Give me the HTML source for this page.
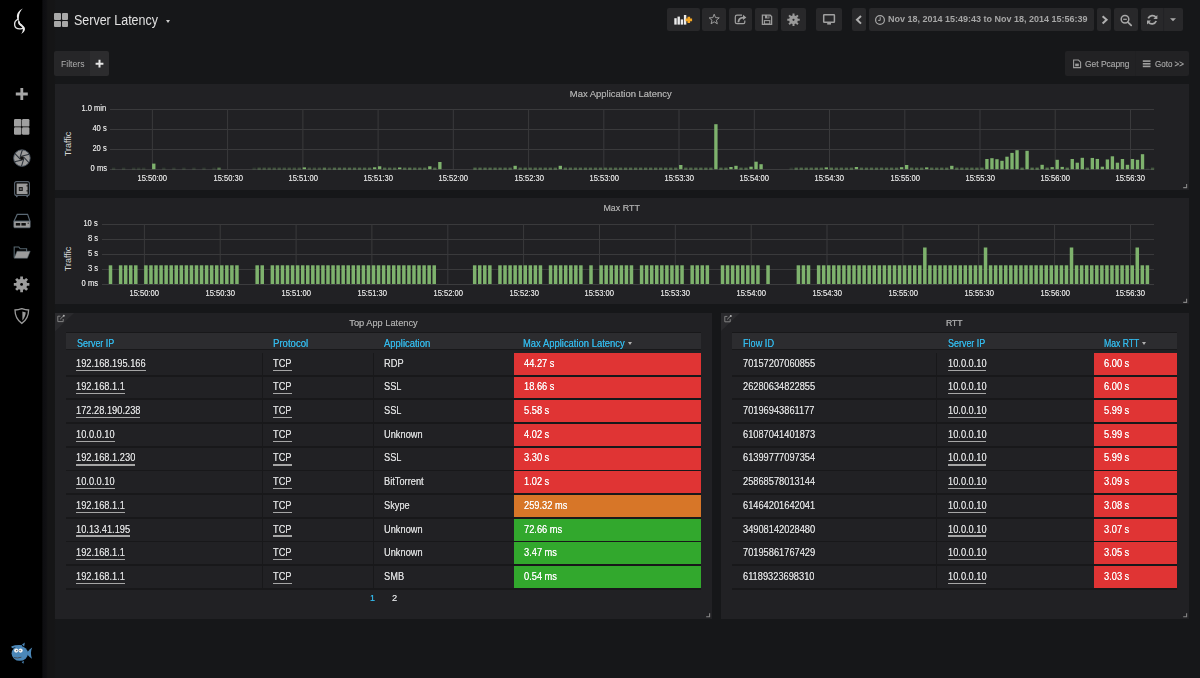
<!DOCTYPE html>
<html><head><meta charset="utf-8">
<style>
*{margin:0;padding:0;box-sizing:border-box}
html,body{width:1200px;height:678px;overflow:hidden;background:#161719;font-family:"Liberation Sans",sans-serif;color:#d8d9da}
.a{position:absolute}
.btn{position:absolute;top:8px;height:23px;background:#28282a;border-radius:2px}
.t{position:absolute;white-space:pre;line-height:1}
.hdr{position:absolute;height:15.6px;background:#2c2c2f;border-top:1.7px solid #18181a;border-bottom:1.8px solid #18181a;box-sizing:content-box}
</style></head><body>

<div class="a" style="left:0;top:0;width:42px;height:678px;background:#000"></div>
<div class="a" style="left:42px;top:0;width:14px;height:678px;background:linear-gradient(to right,#060607 0px,#0e0e11 1.5px,#101013 4px,#151516 6px,#151516 12px,#161719 14px)"></div>
<svg class="a" style="left:0;top:0" width="42" height="678"><path d="M22.8,8.6 C19.2,10.3 16.8,13.4 16.9,16.8 C17,19.8 18.6,21.8 20.6,23.5 C23,25.5 25.1,27 25,28.9 C24.9,31.1 23.2,32.7 21.1,34 C22.1,32.4 23,30.7 22.8,28.9 C22.6,27.2 20.4,25.6 19.2,24.4 C18.3,23.3 18.8,21.2 18.9,16.9 C19,13.6 20.6,10.8 22.8,8.6 Z" fill="#ececec"/><path d="M18.2,19.2 C15.7,20.2 14.3,22.8 14.7,25.4 C15.1,27.9 17.6,28.9 20.2,28.8 C21.4,28.7 22.4,28.5 23.3,28.1" fill="none" stroke="#e6e6e6" stroke-width="1.3"/><path d="M18.9,21.6 C18.7,23.4 19.6,24.6 21.6,25.4" fill="none" stroke="#e6e6e6" stroke-width="1.7" stroke-linecap="round"/><path d="M21.8,88 V100 M15.8,94 H27.8" stroke="#a6a6a6" stroke-width="2.8"/><rect x="14" y="119" width="7.4" height="7.6" rx="1.2" fill="#a0a0a0"/><rect x="22" y="119" width="7.4" height="7.6" rx="1.2" fill="#a0a0a0"/><rect x="14" y="127.2" width="7.4" height="7.6" rx="1.2" fill="#a0a0a0"/><rect x="22" y="127.2" width="7.4" height="7.6" rx="1.2" fill="#a0a0a0"/><circle cx="21.9" cy="158.1" r="8.3" fill="#9c9c9c" stroke="#46505c" stroke-width="0.9"/><line x1="23.81" y1="158.69" x2="21.43" y2="166.39" stroke="#2a3038" stroke-width="1.05"/><line x1="22.34" y1="160.05" x2="14.49" y2="161.84" stroke="#2a3038" stroke-width="1.05"/><line x1="20.43" y1="159.46" x2="14.96" y2="153.55" stroke="#2a3038" stroke-width="1.05"/><line x1="19.99" y1="157.51" x2="22.37" y2="149.81" stroke="#2a3038" stroke-width="1.05"/><line x1="21.46" y1="156.15" x2="29.31" y2="154.36" stroke="#2a3038" stroke-width="1.05"/><line x1="23.37" y1="156.74" x2="28.84" y2="162.65" stroke="#2a3038" stroke-width="1.05"/><circle cx="21.9" cy="158.1" r="1.9" fill="#111"/><rect x="14.6" y="181.6" width="14.8" height="13.8" rx="2" fill="none" stroke="#58636e" stroke-width="1.1"/><rect x="16.6" y="183.5" width="11" height="10.6" fill="#9a9a9a"/><rect x="18.8" y="187" width="4" height="4" fill="#222"/><rect x="19.8" y="188" width="2" height="2" fill="#666"/><rect x="26.6" y="185" width="1.2" height="1.6" fill="#222"/><rect x="26.6" y="190" width="1.2" height="1.6" fill="#222"/><rect x="16" y="195.6" width="1.6" height="1.6" fill="#58636e"/><rect x="26.4" y="195.6" width="1.6" height="1.6" fill="#58636e"/><path d="M17.2,214.4 H27.6 L30,221.2 H14 Z" fill="none" stroke="#5a6874" stroke-width="1.1"/><rect x="13.8" y="221.2" width="16.4" height="6.6" rx="0.8" fill="#9c9c9c" stroke="#5a6874" stroke-width="0.6"/><rect x="15.8" y="223" width="4.4" height="2.6" fill="#111"/><rect x="21.4" y="223" width="4.4" height="2.6" fill="#111"/><circle cx="28.2" cy="223.2" r="0.6" fill="#111"/><path d="M14.2,257.8 V247 H18.8 L20.2,248.8 H26.6 V251.4" fill="none" stroke="#56666f" stroke-width="1.1"/><path d="M14.2,258.2 L17,251.2 H30.2 L27.4,258.2 Z" fill="#9c9c9c" stroke="#56666f" stroke-width="0.5"/><path d="M27.03,283.02 L29.38,283.04 L29.38,285.76 L27.03,285.78 L26.41,287.26 L28.06,288.94 L26.14,290.86 L24.46,289.21 L22.98,289.83 L22.96,292.18 L20.24,292.18 L20.22,289.83 L18.74,289.21 L17.06,290.86 L15.14,288.94 L16.79,287.26 L16.17,285.78 L13.82,285.76 L13.82,283.04 L16.17,283.02 L16.79,281.54 L15.14,279.86 L17.06,277.94 L18.74,279.59 L20.22,278.97 L20.24,276.62 L22.96,276.62 L22.98,278.97 L24.46,279.59 L26.14,277.94 L28.06,279.86 L26.41,281.54Z" fill="#9c9c9c"/><circle cx="21.6" cy="284.4" r="4.6" fill="#9c9c9c"/><circle cx="21.6" cy="284.4" r="1.4" fill="#000"/><path d="M21.8,308.6 C24.4,309.6 26.6,310 28.6,310 C28.6,315.8 26.2,320.4 21.8,323.4 C17.4,320.4 15,315.8 15,310 C17,310 19.2,309.6 21.8,308.6 Z" fill="none" stroke="#9a9a9a" stroke-width="1.3"/><path d="M22.4,311.6 L25.8,312.4 C25.4,315.8 24,318.6 22.4,320.4 Z" fill="#9a9a9a"/><path d="M22,644.6 L24.8,642.6 L24.2,646.5 Z" fill="#4b87b8"/><path d="M27,652.5 Q30,648.4 32.2,647.6 Q29.8,652.6 32,658.8 Q29.6,657.4 27.2,654.6 Z" fill="#4b87b8"/><path d="M21.6,662 L23.4,663.8 L24,661 Z" fill="#4b87b8"/><ellipse cx="19.8" cy="653.4" rx="8.2" ry="7.4" fill="#4b87b8"/><path d="M11.6,647.4 Q16,645.6 22,646.2" fill="none" stroke="#4b87b8" stroke-width="2"/><circle cx="16.2" cy="650.6" r="2.1" fill="#f4f4f4"/><circle cx="20.6" cy="650.6" r="2.1" fill="#f4f4f4"/><circle cx="16.7" cy="650.6" r="0.7" fill="#555"/><circle cx="20.1" cy="650.6" r="0.7" fill="#555"/><path d="M14,657.6 Q17.5,658.6 21.4,657.2" fill="none" stroke="#444" stroke-width="0.9"/></svg>
<div class="a" style="left:54px;top:13px;width:6.6px;height:6.6px;background:#a8a8a8;border-radius:1px"></div>
<div class="a" style="left:61.5px;top:13px;width:6.6px;height:6.6px;background:#a8a8a8;border-radius:1px"></div>
<div class="a" style="left:54px;top:20.5px;width:6.6px;height:6.6px;background:#a8a8a8;border-radius:1px"></div>
<div class="a" style="left:61.5px;top:20.5px;width:6.6px;height:6.6px;background:#a8a8a8;border-radius:1px"></div>
<div class="a" style="left:166px;top:20px;width:0;height:0;border-left:2.5px solid transparent;border-right:2.5px solid transparent;border-top:3px solid #ccc"></div>
<div class="btn" style="left:667px;width:33px"></div>
<div class="btn" style="left:702px;width:24px"></div>
<div class="btn" style="left:729px;width:23px"></div>
<div class="btn" style="left:755px;width:23px"></div>
<div class="btn" style="left:781px;width:25px"></div>
<div class="btn" style="left:816px;width:26px"></div>
<div class="btn" style="left:852px;width:14px"></div>
<div class="btn" style="left:869px;width:225px"></div>
<div class="btn" style="left:1097px;width:14px"></div>
<div class="btn" style="left:1114px;width:24px"></div>
<div class="btn" style="left:1141px;width:42px"></div>
<svg class="a" style="left:0;top:0" width="1200" height="40"><rect x="674.3" y="18.2" width="2.4" height="6.4" fill="#ececec"/><rect x="677.5" y="16.6" width="2.4" height="8.0" fill="#ececec"/><rect x="680.7" y="19.4" width="2.4" height="5.2" fill="#ececec"/><rect x="683.9" y="15" width="2.4" height="9.6" fill="#ececec"/><path d="M688.8,16.8 V23.1 M685.6,19.9 H692.1" stroke="#f5a623" stroke-width="2.6"/><polygon points="714.20,14.20 715.55,17.64 719.24,17.86 716.39,20.21 717.32,23.79 714.20,21.80 711.08,23.79 712.01,20.21 709.16,17.86 712.85,17.64" fill="none" stroke="#9c9c9c" stroke-width="1" stroke-linejoin="round"/><path d="M742,15.2 H737 Q735.3,15.2 735.3,17 V22.2 Q735.3,23.6 737,23.6 H743.4 Q744.8,23.6 744.8,22.2 V20.6" fill="none" stroke="#a0a0a0" stroke-width="1.2"/><path d="M738.4,22.2 Q738.6,17.8 743.2,17.6" fill="none" stroke="#a0a0a0" stroke-width="1.8"/><path d="M743,14.8 L746.4,17.4 L743,20 Z" fill="#a0a0a0"/><path d="M762.4,15.2 H770.2 L771.6,16.6 V24.4 H762.4 Z" fill="none" stroke="#9c9c9c" stroke-width="1.3"/><rect x="765" y="15" width="4.4" height="3.4" fill="#9c9c9c"/><rect x="767.4" y="15.6" width="1.1" height="2.2" fill="#2a2a2c"/><rect x="764.4" y="20.6" width="5.4" height="3.4" fill="none" stroke="#9c9c9c" stroke-width="1.1"/><path d="M797.79,18.81 L799.72,18.81 L799.72,20.79 L797.79,20.79 L797.23,22.14 L798.60,23.50 L797.20,24.90 L795.84,23.53 L794.49,24.09 L794.49,26.02 L792.51,26.02 L792.51,24.09 L791.16,23.53 L789.80,24.90 L788.40,23.50 L789.77,22.14 L789.21,20.79 L787.28,20.79 L787.28,18.81 L789.21,18.81 L789.77,17.46 L788.40,16.10 L789.80,14.70 L791.16,16.07 L792.51,15.51 L792.51,13.58 L794.49,13.58 L794.49,15.51 L795.84,16.07 L797.20,14.70 L798.60,16.10 L797.23,17.46Z" fill="#9a9a9a"/><circle cx="793.5" cy="19.8" r="3.8" fill="#9a9a9a"/><circle cx="793.5" cy="19.8" r="1.1" fill="#2a2a2c"/><rect x="823.7" y="14.7" width="10.7" height="7.6" rx="0.6" fill="none" stroke="#a0a0a0" stroke-width="1.5"/><rect x="827.2" y="22.6" width="3.8" height="2" fill="#a0a0a0"/><path d="M861,16 L857,19.8 L861,23.6" fill="none" stroke="#b0b0b0" stroke-width="2"/><path d="M1102.6,16.2 L1106.6,19.8 L1102.6,23.4" fill="none" stroke="#b0b0b0" stroke-width="2"/><circle cx="880" cy="20" r="4.4" fill="none" stroke="#a8a8a8" stroke-width="1.2"/><path d="M880.2,17.2 V20.4 H878.2" fill="none" stroke="#a8a8a8" stroke-width="1"/><circle cx="1125" cy="19.3" r="3.8" fill="none" stroke="#a8a8a8" stroke-width="1.5"/><path d="M1127.8,22.2 L1131.2,25.4" stroke="#a8a8a8" stroke-width="1.8" stroke-linecap="round"/><path d="M1123.2,19.3 H1126.8" stroke="#a8a8a8" stroke-width="1.2"/><path d="M1148.2,18.4 A4.6,4.6 0 0 1 1156,17.4" fill="none" stroke="#a8a8a8" stroke-width="1.8"/><path d="M1157.4,15 V19 H1153.4 Z" fill="#a8a8a8"/><path d="M1156.2,21 A4.6,4.6 0 0 1 1148.4,22.2" fill="none" stroke="#a8a8a8" stroke-width="1.8"/><path d="M1147,24.4 V20.4 H1151 Z" fill="#a8a8a8"/><path d="M1170,18.2 H1176 L1173,21.2 Z" fill="#a8a8a8"/><line x1="1163.6" y1="8" x2="1163.6" y2="31" stroke="#232325" stroke-width="1"/></svg>
<div class="a" style="left:54px;top:51px;width:36px;height:25px;background:#262628;border-radius:2px 0 0 2px"></div>
<div class="a" style="left:90px;top:51px;width:19px;height:25px;background:#2c2c2e;border-radius:0 2px 2px 0"></div>
<svg class="a" style="left:0;top:0" width="120" height="80"><path d="M99.5,59.8 V67.6 M95.6,63.7 H103.4" stroke="#e6e6e6" stroke-width="2"/></svg>
<div class="a" style="left:1065px;top:51px;width:124px;height:25px;background:#222224;border-radius:2px"></div>
<div class="a" style="left:1135px;top:51px;width:1px;height:25px;background:#202022"></div>
<svg class="a" style="left:1060px;top:50px" width="100" height="30"><path d="M13.6,10 H18.4 L20.6,12.2 V17.6 H13.6 Z" fill="none" stroke="#9a9a9a" stroke-width="1.1"/><rect x="15.2" y="13.6" width="3.6" height="2.6" fill="#9a9a9a"/><rect x="82.8" y="10.3" width="7.7" height="1.6" fill="#a0a0a0"/><rect x="82.8" y="13" width="7.7" height="1.6" fill="#a0a0a0"/><rect x="82.8" y="15.6" width="7.7" height="1.6" fill="#a0a0a0"/></svg>
<div class="a" style="left:55px;top:84px;width:1134px;height:106px;background:#212124"></div>
<div class="a" style="left:55px;top:198px;width:1134px;height:106px;background:#212124"></div>
<div class="a" style="left:55px;top:313px;width:657px;height:306px;background:#212124"></div>
<div class="a" style="left:721px;top:313px;width:468px;height:306px;background:#212124"></div>
<svg class="a" style="left:0;top:0" width="1200" height="678"><line x1="110" x2="1154" y1="109.5" y2="109.5" stroke="#3a3a3c" stroke-width="1"/><line x1="110" x2="1154" y1="129.5" y2="129.5" stroke="#3a3a3c" stroke-width="1"/><line x1="110" x2="1154" y1="149.5" y2="149.5" stroke="#3a3a3c" stroke-width="1"/><line x1="110" x2="1154" y1="169.5" y2="169.5" stroke="#3c3c3e" stroke-width="1"/><line x1="152.4" x2="152.4" y1="109" y2="169" stroke="#3a3a3c" stroke-width="1"/><line x1="227.6" x2="227.6" y1="109" y2="169" stroke="#3a3a3c" stroke-width="1"/><line x1="302.9" x2="302.9" y1="109" y2="169" stroke="#3a3a3c" stroke-width="1"/><line x1="378.1" x2="378.1" y1="109" y2="169" stroke="#3a3a3c" stroke-width="1"/><line x1="453.3" x2="453.3" y1="109" y2="169" stroke="#3a3a3c" stroke-width="1"/><line x1="528.6" x2="528.6" y1="109" y2="169" stroke="#3a3a3c" stroke-width="1"/><line x1="603.8" x2="603.8" y1="109" y2="169" stroke="#3a3a3c" stroke-width="1"/><line x1="679.0" x2="679.0" y1="109" y2="169" stroke="#3a3a3c" stroke-width="1"/><line x1="754.3" x2="754.3" y1="109" y2="169" stroke="#3a3a3c" stroke-width="1"/><line x1="829.5" x2="829.5" y1="109" y2="169" stroke="#3a3a3c" stroke-width="1"/><line x1="904.8" x2="904.8" y1="109" y2="169" stroke="#3a3a3c" stroke-width="1"/><line x1="980.0" x2="980.0" y1="109" y2="169" stroke="#3a3a3c" stroke-width="1"/><line x1="1055.2" x2="1055.2" y1="109" y2="169" stroke="#3a3a3c" stroke-width="1"/><line x1="1130.5" x2="1130.5" y1="109" y2="169" stroke="#3a3a3c" stroke-width="1"/><rect x="111.95" y="167.60" width="3.35" height="2.2" fill="#7eb26d" fill-opacity="0.16"/><rect x="121.99" y="167.60" width="3.35" height="2.2" fill="#7eb26d" fill-opacity="0.16"/><rect x="132.03" y="167.60" width="3.35" height="2.2" fill="#7eb26d" fill-opacity="0.16"/><rect x="137.05" y="167.60" width="3.35" height="2.2" fill="#7eb26d" fill-opacity="0.16"/><rect x="142.06" y="167.60" width="3.35" height="2.2" fill="#7eb26d" fill-opacity="0.16"/><rect x="152.10" y="163.60" width="3.35" height="5.60" fill="#7eb26d"/><rect x="162.14" y="167.60" width="3.35" height="2.2" fill="#7eb26d" fill-opacity="0.16"/><rect x="172.18" y="167.60" width="3.35" height="2.2" fill="#7eb26d" fill-opacity="0.16"/><rect x="182.22" y="167.60" width="3.35" height="2.2" fill="#7eb26d" fill-opacity="0.16"/><rect x="192.25" y="167.60" width="3.35" height="2.2" fill="#7eb26d" fill-opacity="0.16"/><rect x="202.29" y="167.60" width="3.35" height="2.2" fill="#7eb26d" fill-opacity="0.16"/><rect x="212.33" y="167.60" width="3.35" height="2.2" fill="#7eb26d" fill-opacity="0.16"/><rect x="217.35" y="167.60" width="3.35" height="2.2" fill="#7eb26d" fill-opacity="0.58"/><rect x="252.48" y="167.60" width="3.35" height="2.2" fill="#7eb26d" fill-opacity="0.16"/><rect x="257.50" y="167.60" width="3.35" height="2.2" fill="#7eb26d" fill-opacity="0.35"/><rect x="262.52" y="167.60" width="3.35" height="2.2" fill="#7eb26d" fill-opacity="0.35"/><rect x="267.54" y="167.60" width="3.35" height="2.2" fill="#7eb26d" fill-opacity="0.35"/><rect x="272.56" y="167.60" width="3.35" height="2.2" fill="#7eb26d" fill-opacity="0.35"/><rect x="277.58" y="167.60" width="3.35" height="2.2" fill="#7eb26d" fill-opacity="0.35"/><rect x="282.60" y="167.60" width="3.35" height="2.2" fill="#7eb26d" fill-opacity="0.35"/><rect x="287.62" y="167.60" width="3.35" height="2.2" fill="#7eb26d" fill-opacity="0.35"/><rect x="292.63" y="167.60" width="3.35" height="2.2" fill="#7eb26d" fill-opacity="0.35"/><rect x="297.65" y="167.60" width="3.35" height="2.2" fill="#7eb26d" fill-opacity="0.35"/><rect x="302.67" y="167.40" width="3.35" height="1.80" fill="#7eb26d"/><rect x="307.69" y="167.60" width="3.35" height="2.2" fill="#7eb26d" fill-opacity="0.35"/><rect x="312.71" y="167.60" width="3.35" height="2.2" fill="#7eb26d" fill-opacity="0.35"/><rect x="317.73" y="167.60" width="3.35" height="2.2" fill="#7eb26d" fill-opacity="0.35"/><rect x="322.75" y="167.60" width="3.35" height="2.2" fill="#7eb26d" fill-opacity="0.58"/><rect x="327.77" y="167.60" width="3.35" height="2.2" fill="#7eb26d" fill-opacity="0.35"/><rect x="332.79" y="167.60" width="3.35" height="2.2" fill="#7eb26d" fill-opacity="0.50"/><rect x="337.81" y="167.60" width="3.35" height="2.2" fill="#7eb26d" fill-opacity="0.50"/><rect x="342.82" y="167.60" width="3.35" height="2.2" fill="#7eb26d" fill-opacity="0.50"/><rect x="347.84" y="167.60" width="3.35" height="2.2" fill="#7eb26d" fill-opacity="0.50"/><rect x="352.86" y="167.60" width="3.35" height="2.2" fill="#7eb26d" fill-opacity="0.50"/><rect x="357.88" y="167.60" width="3.35" height="2.2" fill="#7eb26d" fill-opacity="0.50"/><rect x="362.90" y="167.60" width="3.35" height="2.2" fill="#7eb26d" fill-opacity="0.50"/><rect x="367.92" y="167.60" width="3.35" height="2.2" fill="#7eb26d" fill-opacity="0.50"/><rect x="372.94" y="167.30" width="3.35" height="1.90" fill="#7eb26d"/><rect x="377.96" y="166.30" width="3.35" height="2.90" fill="#7eb26d"/><rect x="382.98" y="167.60" width="3.35" height="2.2" fill="#7eb26d" fill-opacity="0.50"/><rect x="388.00" y="167.60" width="3.35" height="2.2" fill="#7eb26d" fill-opacity="0.50"/><rect x="393.01" y="167.60" width="3.35" height="2.2" fill="#7eb26d" fill-opacity="0.50"/><rect x="398.03" y="167.50" width="3.35" height="1.70" fill="#7eb26d"/><rect x="403.05" y="167.60" width="3.35" height="2.2" fill="#7eb26d" fill-opacity="0.50"/><rect x="408.07" y="167.60" width="3.35" height="2.2" fill="#7eb26d" fill-opacity="0.58"/><rect x="413.09" y="167.60" width="3.35" height="2.2" fill="#7eb26d" fill-opacity="0.50"/><rect x="418.11" y="167.60" width="3.35" height="2.2" fill="#7eb26d" fill-opacity="0.50"/><rect x="423.13" y="167.60" width="3.35" height="2.2" fill="#7eb26d" fill-opacity="0.50"/><rect x="428.15" y="166.30" width="3.35" height="2.90" fill="#7eb26d"/><rect x="433.17" y="167.60" width="3.35" height="2.2" fill="#7eb26d" fill-opacity="0.50"/><rect x="438.19" y="162.00" width="3.35" height="7.20" fill="#7eb26d"/><rect x="473.32" y="167.60" width="3.35" height="2.2" fill="#7eb26d" fill-opacity="0.50"/><rect x="478.34" y="167.60" width="3.35" height="2.2" fill="#7eb26d" fill-opacity="0.50"/><rect x="483.36" y="167.60" width="3.35" height="2.2" fill="#7eb26d" fill-opacity="0.50"/><rect x="488.38" y="167.60" width="3.35" height="2.2" fill="#7eb26d" fill-opacity="0.50"/><rect x="493.39" y="167.60" width="3.35" height="2.2" fill="#7eb26d" fill-opacity="0.50"/><rect x="498.41" y="167.60" width="3.35" height="2.2" fill="#7eb26d" fill-opacity="0.50"/><rect x="503.43" y="167.60" width="3.35" height="2.2" fill="#7eb26d" fill-opacity="0.50"/><rect x="508.45" y="167.60" width="3.35" height="2.2" fill="#7eb26d" fill-opacity="0.50"/><rect x="513.47" y="165.80" width="3.35" height="3.40" fill="#7eb26d"/><rect x="518.49" y="167.60" width="3.35" height="2.2" fill="#7eb26d" fill-opacity="0.50"/><rect x="523.51" y="167.60" width="3.35" height="2.2" fill="#7eb26d" fill-opacity="0.50"/><rect x="528.53" y="167.60" width="3.35" height="2.2" fill="#7eb26d" fill-opacity="0.50"/><rect x="533.55" y="167.60" width="3.35" height="2.2" fill="#7eb26d" fill-opacity="0.50"/><rect x="538.57" y="167.60" width="3.35" height="2.2" fill="#7eb26d" fill-opacity="0.50"/><rect x="543.58" y="167.60" width="3.35" height="2.2" fill="#7eb26d" fill-opacity="0.50"/><rect x="548.60" y="167.60" width="3.35" height="2.2" fill="#7eb26d" fill-opacity="0.50"/><rect x="553.62" y="167.60" width="3.35" height="2.2" fill="#7eb26d" fill-opacity="0.50"/><rect x="558.64" y="165.80" width="3.35" height="3.40" fill="#7eb26d"/><rect x="563.66" y="167.60" width="3.35" height="2.2" fill="#7eb26d" fill-opacity="0.50"/><rect x="568.68" y="167.60" width="3.35" height="2.2" fill="#7eb26d" fill-opacity="0.50"/><rect x="573.70" y="167.60" width="3.35" height="2.2" fill="#7eb26d" fill-opacity="0.50"/><rect x="578.72" y="167.60" width="3.35" height="2.2" fill="#7eb26d" fill-opacity="0.50"/><rect x="583.74" y="167.60" width="3.35" height="2.2" fill="#7eb26d" fill-opacity="0.50"/><rect x="588.75" y="167.60" width="3.35" height="2.2" fill="#7eb26d" fill-opacity="0.50"/><rect x="593.77" y="167.60" width="3.35" height="2.2" fill="#7eb26d" fill-opacity="0.50"/><rect x="598.79" y="167.60" width="3.35" height="2.2" fill="#7eb26d" fill-opacity="0.50"/><rect x="603.81" y="167.60" width="3.35" height="2.2" fill="#7eb26d" fill-opacity="0.50"/><rect x="608.83" y="167.60" width="3.35" height="2.2" fill="#7eb26d" fill-opacity="0.50"/><rect x="613.85" y="167.60" width="3.35" height="2.2" fill="#7eb26d" fill-opacity="0.50"/><rect x="618.87" y="167.60" width="3.35" height="2.2" fill="#7eb26d" fill-opacity="0.50"/><rect x="623.89" y="167.60" width="3.35" height="2.2" fill="#7eb26d" fill-opacity="0.50"/><rect x="628.91" y="167.60" width="3.35" height="2.2" fill="#7eb26d" fill-opacity="0.50"/><rect x="633.93" y="167.60" width="3.35" height="2.2" fill="#7eb26d" fill-opacity="0.50"/><rect x="638.95" y="167.60" width="3.35" height="2.2" fill="#7eb26d" fill-opacity="0.50"/><rect x="643.96" y="167.60" width="3.35" height="2.2" fill="#7eb26d" fill-opacity="0.50"/><rect x="648.98" y="167.60" width="3.35" height="2.2" fill="#7eb26d" fill-opacity="0.50"/><rect x="654.00" y="167.60" width="3.35" height="2.2" fill="#7eb26d" fill-opacity="0.50"/><rect x="659.02" y="167.60" width="3.35" height="2.2" fill="#7eb26d" fill-opacity="0.50"/><rect x="664.04" y="167.60" width="3.35" height="2.2" fill="#7eb26d" fill-opacity="0.50"/><rect x="669.06" y="167.60" width="3.35" height="2.2" fill="#7eb26d" fill-opacity="0.50"/><rect x="674.08" y="167.60" width="3.35" height="2.2" fill="#7eb26d" fill-opacity="0.50"/><rect x="679.10" y="165.00" width="3.35" height="4.20" fill="#7eb26d"/><rect x="684.12" y="167.60" width="3.35" height="2.2" fill="#7eb26d" fill-opacity="0.50"/><rect x="689.14" y="167.60" width="3.35" height="2.2" fill="#7eb26d" fill-opacity="0.50"/><rect x="694.15" y="167.60" width="3.35" height="2.2" fill="#7eb26d" fill-opacity="0.50"/><rect x="699.17" y="167.60" width="3.35" height="2.2" fill="#7eb26d" fill-opacity="0.50"/><rect x="704.19" y="167.60" width="3.35" height="2.2" fill="#7eb26d" fill-opacity="0.50"/><rect x="709.21" y="167.60" width="3.35" height="2.2" fill="#7eb26d" fill-opacity="0.50"/><rect x="714.23" y="124.20" width="3.35" height="45.00" fill="#7eb26d"/><rect x="719.25" y="167.60" width="3.35" height="2.2" fill="#7eb26d" fill-opacity="0.50"/><rect x="724.27" y="167.60" width="3.35" height="2.2" fill="#7eb26d" fill-opacity="0.50"/><rect x="729.29" y="167.00" width="3.35" height="2.20" fill="#7eb26d"/><rect x="734.31" y="165.80" width="3.35" height="3.40" fill="#7eb26d"/><rect x="739.33" y="167.60" width="3.35" height="2.2" fill="#7eb26d" fill-opacity="0.50"/><rect x="744.34" y="167.60" width="3.35" height="2.2" fill="#7eb26d" fill-opacity="0.50"/><rect x="749.36" y="166.70" width="3.35" height="2.50" fill="#7eb26d"/><rect x="754.38" y="161.70" width="3.35" height="7.50" fill="#7eb26d"/><rect x="759.40" y="164.20" width="3.35" height="5.00" fill="#7eb26d"/><rect x="789.52" y="167.60" width="3.35" height="2.2" fill="#7eb26d" fill-opacity="0.16"/><rect x="794.53" y="167.60" width="3.35" height="2.2" fill="#7eb26d" fill-opacity="0.50"/><rect x="799.55" y="167.60" width="3.35" height="2.2" fill="#7eb26d" fill-opacity="0.50"/><rect x="804.57" y="167.60" width="3.35" height="2.2" fill="#7eb26d" fill-opacity="0.50"/><rect x="809.59" y="167.60" width="3.35" height="2.2" fill="#7eb26d" fill-opacity="0.50"/><rect x="814.61" y="167.60" width="3.35" height="2.2" fill="#7eb26d" fill-opacity="0.58"/><rect x="819.63" y="167.60" width="3.35" height="2.2" fill="#7eb26d" fill-opacity="0.50"/><rect x="824.65" y="167.40" width="3.35" height="1.80" fill="#7eb26d"/><rect x="829.67" y="167.60" width="3.35" height="2.2" fill="#7eb26d" fill-opacity="0.58"/><rect x="834.69" y="167.60" width="3.35" height="2.2" fill="#7eb26d" fill-opacity="0.50"/><rect x="839.71" y="167.60" width="3.35" height="2.2" fill="#7eb26d" fill-opacity="0.50"/><rect x="844.72" y="167.60" width="3.35" height="2.2" fill="#7eb26d" fill-opacity="0.50"/><rect x="849.74" y="167.60" width="3.35" height="2.2" fill="#7eb26d" fill-opacity="0.50"/><rect x="854.76" y="167.00" width="3.35" height="2.20" fill="#7eb26d"/><rect x="859.78" y="167.60" width="3.35" height="2.2" fill="#7eb26d" fill-opacity="0.50"/><rect x="864.80" y="167.60" width="3.35" height="2.2" fill="#7eb26d" fill-opacity="0.50"/><rect x="869.82" y="167.60" width="3.35" height="2.2" fill="#7eb26d" fill-opacity="0.50"/><rect x="874.84" y="167.60" width="3.35" height="2.2" fill="#7eb26d" fill-opacity="0.50"/><rect x="879.86" y="167.60" width="3.35" height="2.2" fill="#7eb26d" fill-opacity="0.50"/><rect x="884.88" y="167.60" width="3.35" height="2.2" fill="#7eb26d" fill-opacity="0.50"/><rect x="889.90" y="167.60" width="3.35" height="2.2" fill="#7eb26d" fill-opacity="0.50"/><rect x="894.91" y="167.60" width="3.35" height="2.2" fill="#7eb26d" fill-opacity="0.50"/><rect x="899.93" y="167.20" width="3.35" height="2.00" fill="#7eb26d"/><rect x="904.95" y="165.00" width="3.35" height="4.20" fill="#7eb26d"/><rect x="909.97" y="167.60" width="3.35" height="2.2" fill="#7eb26d" fill-opacity="0.50"/><rect x="914.99" y="167.60" width="3.35" height="2.2" fill="#7eb26d" fill-opacity="0.50"/><rect x="920.01" y="167.60" width="3.35" height="2.2" fill="#7eb26d" fill-opacity="0.50"/><rect x="925.03" y="167.40" width="3.35" height="1.80" fill="#7eb26d"/><rect x="930.05" y="167.60" width="3.35" height="2.2" fill="#7eb26d" fill-opacity="0.50"/><rect x="935.07" y="167.60" width="3.35" height="2.2" fill="#7eb26d" fill-opacity="0.50"/><rect x="940.09" y="167.60" width="3.35" height="2.2" fill="#7eb26d" fill-opacity="0.50"/><rect x="945.10" y="167.60" width="3.35" height="2.2" fill="#7eb26d" fill-opacity="0.50"/><rect x="950.12" y="165.80" width="3.35" height="3.40" fill="#7eb26d"/><rect x="955.14" y="167.60" width="3.35" height="2.2" fill="#7eb26d" fill-opacity="0.50"/><rect x="960.16" y="167.60" width="3.35" height="2.2" fill="#7eb26d" fill-opacity="0.50"/><rect x="965.18" y="167.60" width="3.35" height="2.2" fill="#7eb26d" fill-opacity="0.50"/><rect x="970.20" y="167.60" width="3.35" height="2.2" fill="#7eb26d" fill-opacity="0.50"/><rect x="975.22" y="167.60" width="3.35" height="2.2" fill="#7eb26d" fill-opacity="0.50"/><rect x="980.24" y="167.60" width="3.35" height="2.2" fill="#7eb26d" fill-opacity="0.50"/><rect x="985.26" y="159.00" width="3.35" height="10.20" fill="#7eb26d"/><rect x="990.28" y="158.20" width="3.35" height="11.00" fill="#7eb26d"/><rect x="995.29" y="159.20" width="3.35" height="10.00" fill="#7eb26d"/><rect x="1000.31" y="160.80" width="3.35" height="8.40" fill="#7eb26d"/><rect x="1005.33" y="156.70" width="3.35" height="12.50" fill="#7eb26d"/><rect x="1010.35" y="152.90" width="3.35" height="16.30" fill="#7eb26d"/><rect x="1015.37" y="150.20" width="3.35" height="19.00" fill="#7eb26d"/><rect x="1020.39" y="167.60" width="3.35" height="2.2" fill="#7eb26d" fill-opacity="0.58"/><rect x="1025.41" y="150.80" width="3.35" height="18.40" fill="#7eb26d"/><rect x="1030.43" y="167.60" width="3.35" height="2.2" fill="#7eb26d" fill-opacity="0.58"/><rect x="1035.45" y="167.60" width="3.35" height="2.2" fill="#7eb26d" fill-opacity="0.58"/><rect x="1040.46" y="164.80" width="3.35" height="4.40" fill="#7eb26d"/><rect x="1045.48" y="167.60" width="3.35" height="2.2" fill="#7eb26d" fill-opacity="0.58"/><rect x="1050.50" y="167.10" width="3.35" height="2.10" fill="#7eb26d"/><rect x="1055.52" y="159.80" width="3.35" height="9.40" fill="#7eb26d"/><rect x="1060.54" y="166.90" width="3.35" height="2.30" fill="#7eb26d"/><rect x="1065.56" y="167.60" width="3.35" height="2.2" fill="#7eb26d" fill-opacity="0.58"/><rect x="1070.58" y="159.00" width="3.35" height="10.20" fill="#7eb26d"/><rect x="1075.60" y="162.70" width="3.35" height="6.50" fill="#7eb26d"/><rect x="1080.62" y="157.80" width="3.35" height="11.40" fill="#7eb26d"/><rect x="1085.64" y="167.60" width="3.35" height="2.2" fill="#7eb26d" fill-opacity="0.54"/><rect x="1090.65" y="157.95" width="3.35" height="11.25" fill="#7eb26d"/><rect x="1095.67" y="158.95" width="3.35" height="10.25" fill="#7eb26d"/><rect x="1100.69" y="166.70" width="3.35" height="2.50" fill="#7eb26d"/><rect x="1105.71" y="159.45" width="3.35" height="9.75" fill="#7eb26d"/><rect x="1110.73" y="156.30" width="3.35" height="12.90" fill="#7eb26d"/><rect x="1115.75" y="162.70" width="3.35" height="6.50" fill="#7eb26d"/><rect x="1120.77" y="159.00" width="3.35" height="10.20" fill="#7eb26d"/><rect x="1125.79" y="164.80" width="3.35" height="4.40" fill="#7eb26d"/><rect x="1130.81" y="159.00" width="3.35" height="10.20" fill="#7eb26d"/><rect x="1135.83" y="159.80" width="3.35" height="9.40" fill="#7eb26d"/><rect x="1140.85" y="154.20" width="3.35" height="15.00" fill="#7eb26d"/><rect x="1145.86" y="167.60" width="3.35" height="2.2" fill="#7eb26d" fill-opacity="0.08"/><rect x="1150.88" y="167.60" width="3.35" height="2.2" fill="#7eb26d" fill-opacity="0.37"/><line x1="102" x2="1154" y1="224.5" y2="224.5" stroke="#3a3a3c" stroke-width="1"/><line x1="102" x2="1154" y1="239.5" y2="239.5" stroke="#3a3a3c" stroke-width="1"/><line x1="102" x2="1154" y1="254.5" y2="254.5" stroke="#3a3a3c" stroke-width="1"/><line x1="102" x2="1154" y1="269.5" y2="269.5" stroke="#3a3a3c" stroke-width="1"/><line x1="102" x2="1154" y1="284.5" y2="284.5" stroke="#3c3c3e" stroke-width="1"/><line x1="144.4" x2="144.4" y1="224" y2="284" stroke="#3a3a3c" stroke-width="1"/><line x1="220.2" x2="220.2" y1="224" y2="284" stroke="#3a3a3c" stroke-width="1"/><line x1="296.1" x2="296.1" y1="224" y2="284" stroke="#3a3a3c" stroke-width="1"/><line x1="371.9" x2="371.9" y1="224" y2="284" stroke="#3a3a3c" stroke-width="1"/><line x1="447.8" x2="447.8" y1="224" y2="284" stroke="#3a3a3c" stroke-width="1"/><line x1="523.6" x2="523.6" y1="224" y2="284" stroke="#3a3a3c" stroke-width="1"/><line x1="599.5" x2="599.5" y1="224" y2="284" stroke="#3a3a3c" stroke-width="1"/><line x1="675.3" x2="675.3" y1="224" y2="284" stroke="#3a3a3c" stroke-width="1"/><line x1="751.2" x2="751.2" y1="224" y2="284" stroke="#3a3a3c" stroke-width="1"/><line x1="827.0" x2="827.0" y1="224" y2="284" stroke="#3a3a3c" stroke-width="1"/><line x1="902.9" x2="902.9" y1="224" y2="284" stroke="#3a3a3c" stroke-width="1"/><line x1="978.7" x2="978.7" y1="224" y2="284" stroke="#3a3a3c" stroke-width="1"/><line x1="1054.6" x2="1054.6" y1="224" y2="284" stroke="#3a3a3c" stroke-width="1"/><line x1="1130.5" x2="1130.5" y1="224" y2="284" stroke="#3a3a3c" stroke-width="1"/><rect x="108.75" y="265.30" width="3.5" height="18.70" fill="#7eb26d"/><rect x="118.87" y="265.30" width="3.5" height="18.70" fill="#7eb26d"/><rect x="123.92" y="265.30" width="3.5" height="18.70" fill="#7eb26d"/><rect x="128.98" y="265.30" width="3.5" height="18.70" fill="#7eb26d"/><rect x="134.04" y="265.30" width="3.5" height="18.70" fill="#7eb26d"/><rect x="144.16" y="265.30" width="3.5" height="18.70" fill="#7eb26d"/><rect x="149.21" y="265.30" width="3.5" height="18.70" fill="#7eb26d"/><rect x="154.27" y="265.30" width="3.5" height="18.70" fill="#7eb26d"/><rect x="159.33" y="265.30" width="3.5" height="18.70" fill="#7eb26d"/><rect x="164.39" y="265.30" width="3.5" height="18.70" fill="#7eb26d"/><rect x="169.45" y="265.30" width="3.5" height="18.70" fill="#7eb26d"/><rect x="174.50" y="265.30" width="3.5" height="18.70" fill="#7eb26d"/><rect x="179.56" y="265.30" width="3.5" height="18.70" fill="#7eb26d"/><rect x="184.62" y="265.30" width="3.5" height="18.70" fill="#7eb26d"/><rect x="189.68" y="265.30" width="3.5" height="18.70" fill="#7eb26d"/><rect x="194.74" y="265.30" width="3.5" height="18.70" fill="#7eb26d"/><rect x="199.79" y="265.30" width="3.5" height="18.70" fill="#7eb26d"/><rect x="204.85" y="265.30" width="3.5" height="18.70" fill="#7eb26d"/><rect x="209.91" y="265.30" width="3.5" height="18.70" fill="#7eb26d"/><rect x="214.97" y="265.30" width="3.5" height="18.70" fill="#7eb26d"/><rect x="220.03" y="265.30" width="3.5" height="18.70" fill="#7eb26d"/><rect x="225.08" y="265.30" width="3.5" height="18.70" fill="#7eb26d"/><rect x="230.14" y="265.30" width="3.5" height="18.70" fill="#7eb26d"/><rect x="235.20" y="265.30" width="3.5" height="18.70" fill="#7eb26d"/><rect x="255.43" y="265.30" width="3.5" height="18.70" fill="#7eb26d"/><rect x="260.49" y="265.30" width="3.5" height="18.70" fill="#7eb26d"/><rect x="270.61" y="265.30" width="3.5" height="18.70" fill="#7eb26d"/><rect x="275.66" y="265.30" width="3.5" height="18.70" fill="#7eb26d"/><rect x="280.72" y="265.30" width="3.5" height="18.70" fill="#7eb26d"/><rect x="285.78" y="265.30" width="3.5" height="18.70" fill="#7eb26d"/><rect x="290.84" y="265.30" width="3.5" height="18.70" fill="#7eb26d"/><rect x="295.90" y="265.30" width="3.5" height="18.70" fill="#7eb26d"/><rect x="300.95" y="265.30" width="3.5" height="18.70" fill="#7eb26d"/><rect x="306.01" y="265.30" width="3.5" height="18.70" fill="#7eb26d"/><rect x="311.07" y="265.30" width="3.5" height="18.70" fill="#7eb26d"/><rect x="316.13" y="265.30" width="3.5" height="18.70" fill="#7eb26d"/><rect x="321.19" y="265.30" width="3.5" height="18.70" fill="#7eb26d"/><rect x="326.24" y="265.30" width="3.5" height="18.70" fill="#7eb26d"/><rect x="331.30" y="265.30" width="3.5" height="18.70" fill="#7eb26d"/><rect x="336.36" y="265.30" width="3.5" height="18.70" fill="#7eb26d"/><rect x="341.42" y="265.30" width="3.5" height="18.70" fill="#7eb26d"/><rect x="346.48" y="265.30" width="3.5" height="18.70" fill="#7eb26d"/><rect x="351.53" y="265.30" width="3.5" height="18.70" fill="#7eb26d"/><rect x="356.59" y="265.30" width="3.5" height="18.70" fill="#7eb26d"/><rect x="361.65" y="265.30" width="3.5" height="18.70" fill="#7eb26d"/><rect x="366.71" y="265.30" width="3.5" height="18.70" fill="#7eb26d"/><rect x="371.77" y="265.30" width="3.5" height="18.70" fill="#7eb26d"/><rect x="376.82" y="265.30" width="3.5" height="18.70" fill="#7eb26d"/><rect x="381.88" y="265.30" width="3.5" height="18.70" fill="#7eb26d"/><rect x="386.94" y="265.30" width="3.5" height="18.70" fill="#7eb26d"/><rect x="392.00" y="265.30" width="3.5" height="18.70" fill="#7eb26d"/><rect x="397.06" y="265.30" width="3.5" height="18.70" fill="#7eb26d"/><rect x="402.11" y="265.30" width="3.5" height="18.70" fill="#7eb26d"/><rect x="407.17" y="265.30" width="3.5" height="18.70" fill="#7eb26d"/><rect x="412.23" y="265.30" width="3.5" height="18.70" fill="#7eb26d"/><rect x="417.29" y="265.30" width="3.5" height="18.70" fill="#7eb26d"/><rect x="422.35" y="265.30" width="3.5" height="18.70" fill="#7eb26d"/><rect x="427.40" y="265.30" width="3.5" height="18.70" fill="#7eb26d"/><rect x="432.46" y="265.30" width="3.5" height="18.70" fill="#7eb26d"/><rect x="472.93" y="265.30" width="3.5" height="18.70" fill="#7eb26d"/><rect x="477.98" y="265.30" width="3.5" height="18.70" fill="#7eb26d"/><rect x="483.04" y="265.30" width="3.5" height="18.70" fill="#7eb26d"/><rect x="488.10" y="265.30" width="3.5" height="18.70" fill="#7eb26d"/><rect x="498.22" y="265.30" width="3.5" height="18.70" fill="#7eb26d"/><rect x="503.27" y="265.30" width="3.5" height="18.70" fill="#7eb26d"/><rect x="508.33" y="265.30" width="3.5" height="18.70" fill="#7eb26d"/><rect x="513.39" y="265.30" width="3.5" height="18.70" fill="#7eb26d"/><rect x="518.45" y="265.30" width="3.5" height="18.70" fill="#7eb26d"/><rect x="523.51" y="265.30" width="3.5" height="18.70" fill="#7eb26d"/><rect x="528.56" y="265.30" width="3.5" height="18.70" fill="#7eb26d"/><rect x="533.62" y="265.30" width="3.5" height="18.70" fill="#7eb26d"/><rect x="538.68" y="265.30" width="3.5" height="18.70" fill="#7eb26d"/><rect x="548.80" y="265.30" width="3.5" height="18.70" fill="#7eb26d"/><rect x="553.85" y="265.30" width="3.5" height="18.70" fill="#7eb26d"/><rect x="558.91" y="265.30" width="3.5" height="18.70" fill="#7eb26d"/><rect x="563.97" y="265.30" width="3.5" height="18.70" fill="#7eb26d"/><rect x="569.03" y="265.30" width="3.5" height="18.70" fill="#7eb26d"/><rect x="574.09" y="265.30" width="3.5" height="18.70" fill="#7eb26d"/><rect x="579.14" y="265.30" width="3.5" height="18.70" fill="#7eb26d"/><rect x="589.26" y="265.30" width="3.5" height="18.70" fill="#7eb26d"/><rect x="599.38" y="265.30" width="3.5" height="18.70" fill="#7eb26d"/><rect x="604.43" y="265.30" width="3.5" height="18.70" fill="#7eb26d"/><rect x="609.49" y="265.30" width="3.5" height="18.70" fill="#7eb26d"/><rect x="614.55" y="265.30" width="3.5" height="18.70" fill="#7eb26d"/><rect x="619.61" y="265.30" width="3.5" height="18.70" fill="#7eb26d"/><rect x="624.67" y="265.30" width="3.5" height="18.70" fill="#7eb26d"/><rect x="629.72" y="265.30" width="3.5" height="18.70" fill="#7eb26d"/><rect x="639.84" y="265.30" width="3.5" height="18.70" fill="#7eb26d"/><rect x="644.90" y="265.30" width="3.5" height="18.70" fill="#7eb26d"/><rect x="649.96" y="265.30" width="3.5" height="18.70" fill="#7eb26d"/><rect x="655.01" y="265.30" width="3.5" height="18.70" fill="#7eb26d"/><rect x="660.07" y="265.30" width="3.5" height="18.70" fill="#7eb26d"/><rect x="665.13" y="265.30" width="3.5" height="18.70" fill="#7eb26d"/><rect x="670.19" y="265.30" width="3.5" height="18.70" fill="#7eb26d"/><rect x="675.25" y="265.30" width="3.5" height="18.70" fill="#7eb26d"/><rect x="680.30" y="265.30" width="3.5" height="18.70" fill="#7eb26d"/><rect x="690.42" y="265.30" width="3.5" height="18.70" fill="#7eb26d"/><rect x="695.48" y="265.30" width="3.5" height="18.70" fill="#7eb26d"/><rect x="700.54" y="265.30" width="3.5" height="18.70" fill="#7eb26d"/><rect x="705.59" y="265.30" width="3.5" height="18.70" fill="#7eb26d"/><rect x="720.77" y="265.30" width="3.5" height="18.70" fill="#7eb26d"/><rect x="725.83" y="265.30" width="3.5" height="18.70" fill="#7eb26d"/><rect x="730.88" y="265.30" width="3.5" height="18.70" fill="#7eb26d"/><rect x="735.94" y="265.30" width="3.5" height="18.70" fill="#7eb26d"/><rect x="741.00" y="265.30" width="3.5" height="18.70" fill="#7eb26d"/><rect x="746.06" y="265.30" width="3.5" height="18.70" fill="#7eb26d"/><rect x="751.12" y="265.30" width="3.5" height="18.70" fill="#7eb26d"/><rect x="756.17" y="265.30" width="3.5" height="18.70" fill="#7eb26d"/><rect x="766.29" y="265.30" width="3.5" height="18.70" fill="#7eb26d"/><rect x="796.64" y="265.30" width="3.5" height="18.70" fill="#7eb26d"/><rect x="801.70" y="265.30" width="3.5" height="18.70" fill="#7eb26d"/><rect x="806.75" y="265.30" width="3.5" height="18.70" fill="#7eb26d"/><rect x="816.87" y="265.30" width="3.5" height="18.70" fill="#7eb26d"/><rect x="821.93" y="265.30" width="3.5" height="18.70" fill="#7eb26d"/><rect x="826.99" y="265.30" width="3.5" height="18.70" fill="#7eb26d"/><rect x="832.04" y="265.30" width="3.5" height="18.70" fill="#7eb26d"/><rect x="837.10" y="265.30" width="3.5" height="18.70" fill="#7eb26d"/><rect x="842.16" y="265.30" width="3.5" height="18.70" fill="#7eb26d"/><rect x="847.22" y="265.30" width="3.5" height="18.70" fill="#7eb26d"/><rect x="852.28" y="265.30" width="3.5" height="18.70" fill="#7eb26d"/><rect x="857.33" y="265.30" width="3.5" height="18.70" fill="#7eb26d"/><rect x="862.39" y="265.30" width="3.5" height="18.70" fill="#7eb26d"/><rect x="867.45" y="265.30" width="3.5" height="18.70" fill="#7eb26d"/><rect x="872.51" y="265.30" width="3.5" height="18.70" fill="#7eb26d"/><rect x="877.57" y="265.30" width="3.5" height="18.70" fill="#7eb26d"/><rect x="882.62" y="265.30" width="3.5" height="18.70" fill="#7eb26d"/><rect x="887.68" y="265.30" width="3.5" height="18.70" fill="#7eb26d"/><rect x="892.74" y="265.30" width="3.5" height="18.70" fill="#7eb26d"/><rect x="897.80" y="265.30" width="3.5" height="18.70" fill="#7eb26d"/><rect x="902.86" y="265.30" width="3.5" height="18.70" fill="#7eb26d"/><rect x="907.91" y="265.30" width="3.5" height="18.70" fill="#7eb26d"/><rect x="912.97" y="265.30" width="3.5" height="18.70" fill="#7eb26d"/><rect x="918.03" y="265.30" width="3.5" height="18.70" fill="#7eb26d"/><rect x="923.09" y="247.50" width="3.5" height="36.50" fill="#7eb26d"/><rect x="928.15" y="265.30" width="3.5" height="18.70" fill="#7eb26d"/><rect x="933.20" y="265.30" width="3.5" height="18.70" fill="#7eb26d"/><rect x="938.26" y="265.30" width="3.5" height="18.70" fill="#7eb26d"/><rect x="943.32" y="265.30" width="3.5" height="18.70" fill="#7eb26d"/><rect x="948.38" y="265.30" width="3.5" height="18.70" fill="#7eb26d"/><rect x="953.44" y="265.30" width="3.5" height="18.70" fill="#7eb26d"/><rect x="958.49" y="265.30" width="3.5" height="18.70" fill="#7eb26d"/><rect x="963.55" y="265.30" width="3.5" height="18.70" fill="#7eb26d"/><rect x="968.61" y="265.30" width="3.5" height="18.70" fill="#7eb26d"/><rect x="973.67" y="265.30" width="3.5" height="18.70" fill="#7eb26d"/><rect x="978.73" y="265.30" width="3.5" height="18.70" fill="#7eb26d"/><rect x="983.78" y="247.50" width="3.5" height="36.50" fill="#7eb26d"/><rect x="988.84" y="265.30" width="3.5" height="18.70" fill="#7eb26d"/><rect x="993.90" y="265.30" width="3.5" height="18.70" fill="#7eb26d"/><rect x="998.96" y="265.30" width="3.5" height="18.70" fill="#7eb26d"/><rect x="1004.02" y="265.30" width="3.5" height="18.70" fill="#7eb26d"/><rect x="1009.07" y="265.30" width="3.5" height="18.70" fill="#7eb26d"/><rect x="1014.13" y="265.30" width="3.5" height="18.70" fill="#7eb26d"/><rect x="1019.19" y="265.30" width="3.5" height="18.70" fill="#7eb26d"/><rect x="1024.25" y="265.30" width="3.5" height="18.70" fill="#7eb26d"/><rect x="1029.31" y="265.30" width="3.5" height="18.70" fill="#7eb26d"/><rect x="1034.36" y="265.30" width="3.5" height="18.70" fill="#7eb26d"/><rect x="1039.42" y="265.30" width="3.5" height="18.70" fill="#7eb26d"/><rect x="1044.48" y="265.30" width="3.5" height="18.70" fill="#7eb26d"/><rect x="1049.54" y="265.30" width="3.5" height="18.70" fill="#7eb26d"/><rect x="1054.60" y="265.30" width="3.5" height="18.70" fill="#7eb26d"/><rect x="1059.65" y="265.30" width="3.5" height="18.70" fill="#7eb26d"/><rect x="1064.71" y="265.30" width="3.5" height="18.70" fill="#7eb26d"/><rect x="1069.77" y="247.50" width="3.5" height="36.50" fill="#7eb26d"/><rect x="1074.83" y="265.30" width="3.5" height="18.70" fill="#7eb26d"/><rect x="1079.89" y="265.30" width="3.5" height="18.70" fill="#7eb26d"/><rect x="1084.94" y="265.30" width="3.5" height="18.70" fill="#7eb26d"/><rect x="1090.00" y="265.30" width="3.5" height="18.70" fill="#7eb26d"/><rect x="1095.06" y="265.30" width="3.5" height="18.70" fill="#7eb26d"/><rect x="1100.12" y="265.30" width="3.5" height="18.70" fill="#7eb26d"/><rect x="1105.18" y="265.30" width="3.5" height="18.70" fill="#7eb26d"/><rect x="1110.23" y="265.30" width="3.5" height="18.70" fill="#7eb26d"/><rect x="1115.29" y="265.30" width="3.5" height="18.70" fill="#7eb26d"/><rect x="1120.35" y="265.30" width="3.5" height="18.70" fill="#7eb26d"/><rect x="1125.41" y="265.30" width="3.5" height="18.70" fill="#7eb26d"/><rect x="1130.47" y="265.30" width="3.5" height="18.70" fill="#7eb26d"/><rect x="1135.52" y="247.50" width="3.5" height="36.50" fill="#7eb26d"/><rect x="1140.58" y="265.30" width="3.5" height="18.70" fill="#7eb26d"/><rect x="1145.64" y="265.30" width="3.5" height="18.70" fill="#7eb26d"/><polygon points="55,313 74,313 55,331.5" fill="#2a2a2d"/><polygon points="721,313 740,313 721,331" fill="#2a2a2d"/><path d="M60.400000000000006,316.20000000000005 H57.800000000000004 V321.6 H63.2 V319.0" fill="none" stroke="#8a8a8a" stroke-width="0.9"/><path d="M60.2,319.20000000000005 L64.0,315.40000000000003" stroke="#8a8a8a" stroke-width="1"/><circle cx="63.800000000000004" cy="315.8" r="1" fill="#b0b0b0"/><path d="M727.4000000000001,316.40000000000003 H724.8000000000001 V321.8 H730.2 V319.2" fill="none" stroke="#8a8a8a" stroke-width="0.9"/><path d="M727.2,319.40000000000003 L731.0,315.6" stroke="#8a8a8a" stroke-width="1"/><circle cx="730.8000000000001" cy="316.0" r="1" fill="#b0b0b0"/></svg>
<div class="t" style="left:67.5px;top:144px;font-size:9px;color:#d6d6d6;transform:translate(-50%,-50%) rotate(-90deg)">Traffic</div>
<div class="t" style="left:67.5px;top:258.5px;font-size:9px;color:#d6d6d6;transform:translate(-50%,-50%) rotate(-90deg)">Traffic</div>
<div class="hdr" style="left:66px;top:332.4px;width:635px"></div>
<div class="hdr" style="left:732px;top:332.4px;width:445px"></div>
<div class="a" style="left:627.5px;top:341.9px;width:0;height:0;border-left:2.8px solid transparent;border-right:2.8px solid transparent;border-top:3.1px solid #b0b0b0"></div>
<div class="a" style="left:1142.3px;top:341.9px;width:0;height:0;border-left:2.8px solid transparent;border-right:2.8px solid transparent;border-top:3.1px solid #b0b0b0"></div>
<div class="a" style="left:513.5px;top:353.00px;width:187.5px;height:21.8px;background:#e03434"></div>
<div class="a" style="left:76.00px;top:369.60px;width:69.60px;height:1.2px;background:#a6a6a6"></div>
<div class="a" style="left:273.20px;top:369.60px;width:18.54px;height:1.2px;background:#a6a6a6"></div>
<div class="a" style="left:513.5px;top:376.68px;width:187.5px;height:21.8px;background:#e03434"></div>
<div class="a" style="left:76.00px;top:393.28px;width:48.97px;height:1.2px;background:#a6a6a6"></div>
<div class="a" style="left:273.20px;top:393.28px;width:18.54px;height:1.2px;background:#a6a6a6"></div>
<div class="a" style="left:513.5px;top:400.36px;width:187.5px;height:21.8px;background:#e03434"></div>
<div class="a" style="left:76.00px;top:416.96px;width:64.44px;height:1.2px;background:#a6a6a6"></div>
<div class="a" style="left:273.20px;top:416.96px;width:18.54px;height:1.2px;background:#a6a6a6"></div>
<div class="a" style="left:513.5px;top:424.04px;width:187.5px;height:21.8px;background:#e03434"></div>
<div class="a" style="left:76.00px;top:440.64px;width:38.67px;height:1.2px;background:#a6a6a6"></div>
<div class="a" style="left:273.20px;top:440.64px;width:18.54px;height:1.2px;background:#a6a6a6"></div>
<div class="a" style="left:513.5px;top:447.72px;width:187.5px;height:21.8px;background:#e03434"></div>
<div class="a" style="left:76.00px;top:464.32px;width:59.28px;height:1.2px;background:#a6a6a6"></div>
<div class="a" style="left:273.20px;top:464.32px;width:18.54px;height:1.2px;background:#a6a6a6"></div>
<div class="a" style="left:513.5px;top:471.40px;width:187.5px;height:21.8px;background:#e03434"></div>
<div class="a" style="left:76.00px;top:488.00px;width:38.67px;height:1.2px;background:#a6a6a6"></div>
<div class="a" style="left:273.20px;top:488.00px;width:18.54px;height:1.2px;background:#a6a6a6"></div>
<div class="a" style="left:513.5px;top:495.08px;width:187.5px;height:21.8px;background:#d77628"></div>
<div class="a" style="left:76.00px;top:511.68px;width:48.97px;height:1.2px;background:#a6a6a6"></div>
<div class="a" style="left:273.20px;top:511.68px;width:18.54px;height:1.2px;background:#a6a6a6"></div>
<div class="a" style="left:513.5px;top:518.76px;width:187.5px;height:21.8px;background:#32a82d"></div>
<div class="a" style="left:76.00px;top:535.36px;width:54.13px;height:1.2px;background:#a6a6a6"></div>
<div class="a" style="left:273.20px;top:535.36px;width:18.54px;height:1.2px;background:#a6a6a6"></div>
<div class="a" style="left:513.5px;top:542.44px;width:187.5px;height:21.8px;background:#32a82d"></div>
<div class="a" style="left:76.00px;top:559.04px;width:48.97px;height:1.2px;background:#a6a6a6"></div>
<div class="a" style="left:273.20px;top:559.04px;width:18.54px;height:1.2px;background:#a6a6a6"></div>
<div class="a" style="left:513.5px;top:566.12px;width:187.5px;height:21.8px;background:#32a82d"></div>
<div class="a" style="left:76.00px;top:582.72px;width:48.97px;height:1.2px;background:#a6a6a6"></div>
<div class="a" style="left:273.20px;top:582.72px;width:18.54px;height:1.2px;background:#a6a6a6"></div>
<div class="a" style="left:1093.8px;top:353.00px;width:83.2px;height:21.8px;background:#e03434"></div>
<div class="a" style="left:947.60px;top:369.60px;width:38.67px;height:1.2px;background:#a6a6a6"></div>
<div class="a" style="left:1093.8px;top:376.68px;width:83.2px;height:21.8px;background:#e03434"></div>
<div class="a" style="left:947.60px;top:393.28px;width:38.67px;height:1.2px;background:#a6a6a6"></div>
<div class="a" style="left:1093.8px;top:400.36px;width:83.2px;height:21.8px;background:#e03434"></div>
<div class="a" style="left:947.60px;top:416.96px;width:38.67px;height:1.2px;background:#a6a6a6"></div>
<div class="a" style="left:1093.8px;top:424.04px;width:83.2px;height:21.8px;background:#e03434"></div>
<div class="a" style="left:947.60px;top:440.64px;width:38.67px;height:1.2px;background:#a6a6a6"></div>
<div class="a" style="left:1093.8px;top:447.72px;width:83.2px;height:21.8px;background:#e03434"></div>
<div class="a" style="left:947.60px;top:464.32px;width:38.67px;height:1.2px;background:#a6a6a6"></div>
<div class="a" style="left:1093.8px;top:471.40px;width:83.2px;height:21.8px;background:#e03434"></div>
<div class="a" style="left:947.60px;top:488.00px;width:38.67px;height:1.2px;background:#a6a6a6"></div>
<div class="a" style="left:1093.8px;top:495.08px;width:83.2px;height:21.8px;background:#e03434"></div>
<div class="a" style="left:947.60px;top:511.68px;width:38.67px;height:1.2px;background:#a6a6a6"></div>
<div class="a" style="left:1093.8px;top:518.76px;width:83.2px;height:21.8px;background:#e03434"></div>
<div class="a" style="left:947.60px;top:535.36px;width:38.67px;height:1.2px;background:#a6a6a6"></div>
<div class="a" style="left:1093.8px;top:542.44px;width:83.2px;height:21.8px;background:#e03434"></div>
<div class="a" style="left:947.60px;top:559.04px;width:38.67px;height:1.2px;background:#a6a6a6"></div>
<div class="a" style="left:1093.8px;top:566.12px;width:83.2px;height:21.8px;background:#e03434"></div>
<div class="a" style="left:947.60px;top:582.72px;width:38.67px;height:1.2px;background:#a6a6a6"></div>
<div class="a" style="left:66px;top:374.80px;width:635px;height:1.88px;background:#18181a"></div>
<div class="a" style="left:732px;top:374.80px;width:445px;height:1.88px;background:#18181a"></div>
<div class="a" style="left:66px;top:398.48px;width:635px;height:1.88px;background:#18181a"></div>
<div class="a" style="left:732px;top:398.48px;width:445px;height:1.88px;background:#18181a"></div>
<div class="a" style="left:66px;top:422.16px;width:635px;height:1.88px;background:#18181a"></div>
<div class="a" style="left:732px;top:422.16px;width:445px;height:1.88px;background:#18181a"></div>
<div class="a" style="left:66px;top:445.84px;width:635px;height:1.88px;background:#18181a"></div>
<div class="a" style="left:732px;top:445.84px;width:445px;height:1.88px;background:#18181a"></div>
<div class="a" style="left:66px;top:469.52px;width:635px;height:1.88px;background:#18181a"></div>
<div class="a" style="left:732px;top:469.52px;width:445px;height:1.88px;background:#18181a"></div>
<div class="a" style="left:66px;top:493.20px;width:635px;height:1.88px;background:#18181a"></div>
<div class="a" style="left:732px;top:493.20px;width:445px;height:1.88px;background:#18181a"></div>
<div class="a" style="left:66px;top:516.88px;width:635px;height:1.88px;background:#18181a"></div>
<div class="a" style="left:732px;top:516.88px;width:445px;height:1.88px;background:#18181a"></div>
<div class="a" style="left:66px;top:540.56px;width:635px;height:1.88px;background:#18181a"></div>
<div class="a" style="left:732px;top:540.56px;width:445px;height:1.88px;background:#18181a"></div>
<div class="a" style="left:66px;top:564.24px;width:635px;height:1.88px;background:#18181a"></div>
<div class="a" style="left:732px;top:564.24px;width:445px;height:1.88px;background:#18181a"></div>
<div class="a" style="left:66px;top:587.92px;width:635px;height:1.88px;background:#18181a"></div>
<div class="a" style="left:732px;top:587.92px;width:445px;height:1.88px;background:#18181a"></div>
<div class="a" style="left:262px;top:353px;width:1.1px;height:236.8px;background:#18181a"></div>
<div class="a" style="left:373px;top:353px;width:1.1px;height:236.8px;background:#18181a"></div>
<div class="a" style="left:936px;top:353px;width:1.1px;height:236.8px;background:#18181a"></div>
<svg class="a" style="left:0;top:0" width="1200" height="678"><path d="M1183.1999999999998,187.6 H1186.6 V184.0" fill="none" stroke="#858585" stroke-width="1.1"/><path d="M1183.1999999999998,302.4 H1186.6 V298.79999999999995" fill="none" stroke="#858585" stroke-width="1.1"/><path d="M706.2,616.8 H709.6 V613.1999999999999" fill="none" stroke="#858585" stroke-width="1.1"/><path d="M1183.1999999999998,616.8 H1186.6 V613.1999999999999" fill="none" stroke="#858585" stroke-width="1.1"/></svg>
<div class="a" style="left:0;top:0;width:1200px;height:678px;will-change:transform"><div class="t" style="left:74.40px;top:13.15px;font-size:14px;color:#e2e2e2;transform:scaleX(0.8920);transform-origin:0 0;">Server Latency</div><div class="t" style="left:888.10px;top:14.29px;font-size:9.4px;color:#a6a6a6;font-weight:700;transform:scaleX(0.9598);transform-origin:0 0;">Nov 18, 2014 15:49:43 to Nov 18, 2014 15:56:39</div><div class="t" style="left:60.50px;top:58.96px;font-size:9.5px;color:#b0b0b0;transform:scaleX(0.9082);transform-origin:0 0;">Filters</div><div class="t" style="left:1084.50px;top:60.05px;font-size:8.8px;color:#a8a8a8;transform:scaleX(0.9576);transform-origin:0 0;-webkit-text-stroke:0.15px #a8a8a8;">Get Pcapng</div><div class="t" style="left:1154.50px;top:60.05px;font-size:8.8px;color:#a8a8a8;transform:scaleX(0.9120);transform-origin:0 0;-webkit-text-stroke:0.15px #a8a8a8;">Goto &gt;&gt;</div><div class="t" style="left:569.47px;top:88.67px;font-size:9.6px;color:#a6a6a6;transform:scaleX(0.9839);transform-origin:50% 0;text-shadow:0 0 0.4px #a6a6a6;">Max Application Latency</div><div class="t" style="left:601.67px;top:203.27px;font-size:9.6px;color:#a6a6a6;transform:scaleX(0.9270);transform-origin:50% 0;text-shadow:0 0 0.4px #a6a6a6;">Max RTT</div><div class="t" style="left:79.28px;top:104.27px;font-size:8.3px;color:#d8d8d8;transform:scaleX(0.9100);transform-origin:100% 0;text-shadow:0 0 0.4px #d6d6d6;">1.0 min</div><div class="t" style="left:90.81px;top:124.27px;font-size:8.3px;color:#d8d8d8;transform:scaleX(0.9100);transform-origin:100% 0;text-shadow:0 0 0.4px #d6d6d6;">40 s</div><div class="t" style="left:90.81px;top:144.27px;font-size:8.3px;color:#d8d8d8;transform:scaleX(0.9100);transform-origin:100% 0;text-shadow:0 0 0.4px #d6d6d6;">20 s</div><div class="t" style="left:88.52px;top:164.27px;font-size:8.3px;color:#d8d8d8;transform:scaleX(0.9100);transform-origin:100% 0;text-shadow:0 0 0.4px #d6d6d6;">0 ms</div><div class="t" style="left:82.31px;top:218.97px;font-size:8.3px;color:#d8d8d8;transform:scaleX(0.9100);transform-origin:100% 0;text-shadow:0 0 0.4px #d6d6d6;">10 s</div><div class="t" style="left:86.92px;top:233.97px;font-size:8.3px;color:#d8d8d8;transform:scaleX(0.9100);transform-origin:100% 0;text-shadow:0 0 0.4px #d6d6d6;">8 s</div><div class="t" style="left:86.92px;top:248.97px;font-size:8.3px;color:#d8d8d8;transform:scaleX(0.9100);transform-origin:100% 0;text-shadow:0 0 0.4px #d6d6d6;">5 s</div><div class="t" style="left:86.92px;top:263.97px;font-size:8.3px;color:#d8d8d8;transform:scaleX(0.9100);transform-origin:100% 0;text-shadow:0 0 0.4px #d6d6d6;">3 s</div><div class="t" style="left:80.02px;top:278.97px;font-size:8.3px;color:#d8d8d8;transform:scaleX(0.9100);transform-origin:100% 0;text-shadow:0 0 0.4px #d6d6d6;">0 ms</div><div class="t" style="left:136.35px;top:173.87px;font-size:8.3px;color:#d8d8d8;transform:scaleX(0.9103);transform-origin:50% 0;text-shadow:0 0 0.4px #d6d6d6;">15:50:00</div><div class="t" style="left:128.35px;top:288.87px;font-size:8.3px;color:#d8d8d8;transform:scaleX(0.9103);transform-origin:50% 0;text-shadow:0 0 0.4px #d6d6d6;">15:50:00</div><div class="t" style="left:211.58px;top:173.87px;font-size:8.3px;color:#d8d8d8;transform:scaleX(0.9103);transform-origin:50% 0;text-shadow:0 0 0.4px #d6d6d6;">15:50:30</div><div class="t" style="left:204.20px;top:288.87px;font-size:8.3px;color:#d8d8d8;transform:scaleX(0.9103);transform-origin:50% 0;text-shadow:0 0 0.4px #d6d6d6;">15:50:30</div><div class="t" style="left:286.81px;top:173.87px;font-size:8.3px;color:#d8d8d8;transform:scaleX(0.9103);transform-origin:50% 0;text-shadow:0 0 0.4px #d6d6d6;">15:51:00</div><div class="t" style="left:280.05px;top:288.87px;font-size:8.3px;color:#d8d8d8;transform:scaleX(0.9103);transform-origin:50% 0;text-shadow:0 0 0.4px #d6d6d6;">15:51:00</div><div class="t" style="left:362.04px;top:173.87px;font-size:8.3px;color:#d8d8d8;transform:scaleX(0.9103);transform-origin:50% 0;text-shadow:0 0 0.4px #d6d6d6;">15:51:30</div><div class="t" style="left:355.90px;top:288.87px;font-size:8.3px;color:#d8d8d8;transform:scaleX(0.9103);transform-origin:50% 0;text-shadow:0 0 0.4px #d6d6d6;">15:51:30</div><div class="t" style="left:437.27px;top:173.87px;font-size:8.3px;color:#d8d8d8;transform:scaleX(0.9103);transform-origin:50% 0;text-shadow:0 0 0.4px #d6d6d6;">15:52:00</div><div class="t" style="left:431.75px;top:288.87px;font-size:8.3px;color:#d8d8d8;transform:scaleX(0.9103);transform-origin:50% 0;text-shadow:0 0 0.4px #d6d6d6;">15:52:00</div><div class="t" style="left:512.50px;top:173.87px;font-size:8.3px;color:#d8d8d8;transform:scaleX(0.9103);transform-origin:50% 0;text-shadow:0 0 0.4px #d6d6d6;">15:52:30</div><div class="t" style="left:507.60px;top:288.87px;font-size:8.3px;color:#d8d8d8;transform:scaleX(0.9103);transform-origin:50% 0;text-shadow:0 0 0.4px #d6d6d6;">15:52:30</div><div class="t" style="left:587.73px;top:173.87px;font-size:8.3px;color:#d8d8d8;transform:scaleX(0.9103);transform-origin:50% 0;text-shadow:0 0 0.4px #d6d6d6;">15:53:00</div><div class="t" style="left:583.45px;top:288.87px;font-size:8.3px;color:#d8d8d8;transform:scaleX(0.9103);transform-origin:50% 0;text-shadow:0 0 0.4px #d6d6d6;">15:53:00</div><div class="t" style="left:662.96px;top:173.87px;font-size:8.3px;color:#d8d8d8;transform:scaleX(0.9103);transform-origin:50% 0;text-shadow:0 0 0.4px #d6d6d6;">15:53:30</div><div class="t" style="left:659.30px;top:288.87px;font-size:8.3px;color:#d8d8d8;transform:scaleX(0.9103);transform-origin:50% 0;text-shadow:0 0 0.4px #d6d6d6;">15:53:30</div><div class="t" style="left:738.19px;top:173.87px;font-size:8.3px;color:#d8d8d8;transform:scaleX(0.9103);transform-origin:50% 0;text-shadow:0 0 0.4px #d6d6d6;">15:54:00</div><div class="t" style="left:735.15px;top:288.87px;font-size:8.3px;color:#d8d8d8;transform:scaleX(0.9103);transform-origin:50% 0;text-shadow:0 0 0.4px #d6d6d6;">15:54:00</div><div class="t" style="left:813.42px;top:173.87px;font-size:8.3px;color:#d8d8d8;transform:scaleX(0.9103);transform-origin:50% 0;text-shadow:0 0 0.4px #d6d6d6;">15:54:30</div><div class="t" style="left:811.00px;top:288.87px;font-size:8.3px;color:#d8d8d8;transform:scaleX(0.9103);transform-origin:50% 0;text-shadow:0 0 0.4px #d6d6d6;">15:54:30</div><div class="t" style="left:888.65px;top:173.87px;font-size:8.3px;color:#d8d8d8;transform:scaleX(0.9103);transform-origin:50% 0;text-shadow:0 0 0.4px #d6d6d6;">15:55:00</div><div class="t" style="left:886.85px;top:288.87px;font-size:8.3px;color:#d8d8d8;transform:scaleX(0.9103);transform-origin:50% 0;text-shadow:0 0 0.4px #d6d6d6;">15:55:00</div><div class="t" style="left:963.88px;top:173.87px;font-size:8.3px;color:#d8d8d8;transform:scaleX(0.9103);transform-origin:50% 0;text-shadow:0 0 0.4px #d6d6d6;">15:55:30</div><div class="t" style="left:962.70px;top:288.87px;font-size:8.3px;color:#d8d8d8;transform:scaleX(0.9103);transform-origin:50% 0;text-shadow:0 0 0.4px #d6d6d6;">15:55:30</div><div class="t" style="left:1039.11px;top:173.87px;font-size:8.3px;color:#d8d8d8;transform:scaleX(0.9103);transform-origin:50% 0;text-shadow:0 0 0.4px #d6d6d6;">15:56:00</div><div class="t" style="left:1038.55px;top:288.87px;font-size:8.3px;color:#d8d8d8;transform:scaleX(0.9103);transform-origin:50% 0;text-shadow:0 0 0.4px #d6d6d6;">15:56:00</div><div class="t" style="left:1114.34px;top:173.87px;font-size:8.3px;color:#d8d8d8;transform:scaleX(0.9103);transform-origin:50% 0;text-shadow:0 0 0.4px #d6d6d6;">15:56:30</div><div class="t" style="left:1114.40px;top:288.87px;font-size:8.3px;color:#d8d8d8;transform:scaleX(0.9103);transform-origin:50% 0;text-shadow:0 0 0.4px #d6d6d6;">15:56:30</div><div class="t" style="left:347.62px;top:317.77px;font-size:9.6px;color:#a6a6a6;transform:scaleX(0.9640);transform-origin:50% 0;text-shadow:0 0 0.4px #a6a6a6;">Top App Latency</div><div class="t" style="left:945.16px;top:317.77px;font-size:9.6px;color:#a6a6a6;transform:scaleX(0.9035);transform-origin:50% 0;text-shadow:0 0 0.4px #a6a6a6;">RTT</div><div class="t" style="left:76.70px;top:338.68px;font-size:10.3px;color:#33b5e5;transform:scaleX(0.8690);transform-origin:0 0;text-shadow:0 0 0.45px #33b5e5;">Server IP</div><div class="t" style="left:272.75px;top:338.68px;font-size:10.3px;color:#33b5e5;transform:scaleX(0.9330);transform-origin:0 0;text-shadow:0 0 0.45px #33b5e5;">Protocol</div><div class="t" style="left:384.00px;top:338.68px;font-size:10.3px;color:#33b5e5;transform:scaleX(0.9171);transform-origin:0 0;text-shadow:0 0 0.45px #33b5e5;">Application</div><div class="t" style="left:523.30px;top:338.68px;font-size:10.3px;color:#33b5e5;transform:scaleX(0.9158);transform-origin:0 0;text-shadow:0 0 0.45px #33b5e5;">Max Application Latency</div><div class="t" style="left:743.00px;top:338.68px;font-size:10.3px;color:#33b5e5;transform:scaleX(0.8881);transform-origin:0 0;text-shadow:0 0 0.45px #33b5e5;">Flow ID</div><div class="t" style="left:947.50px;top:338.68px;font-size:10.3px;color:#33b5e5;transform:scaleX(0.8690);transform-origin:0 0;text-shadow:0 0 0.45px #33b5e5;">Server IP</div><div class="t" style="left:1103.60px;top:338.68px;font-size:10.3px;color:#33b5e5;transform:scaleX(0.8397);transform-origin:0 0;text-shadow:0 0 0.45px #33b5e5;">Max RTT</div><div class="t" style="left:76.00px;top:358.74px;font-size:10px;color:#d8d9da;transform:scaleX(0.9270);transform-origin:0 0;text-shadow:0 0 0.35px #d8d9da;">192.168.195.166</div><div class="t" style="left:273.20px;top:358.74px;font-size:10px;color:#d8d9da;transform:scaleX(0.9270);transform-origin:0 0;text-shadow:0 0 0.35px #d8d9da;">TCP</div><div class="t" style="left:384.00px;top:358.74px;font-size:10px;color:#d8d9da;transform:scaleX(0.9270);transform-origin:0 0;text-shadow:0 0 0.35px #d8d9da;">RDP</div><div class="t" style="left:523.60px;top:358.74px;font-size:10px;color:#fafafa;transform:scaleX(0.9270);transform-origin:0 0;text-shadow:0 0 0.35px #fafafa;">44.27 s</div><div class="t" style="left:76.00px;top:382.42px;font-size:10px;color:#d8d9da;transform:scaleX(0.9270);transform-origin:0 0;text-shadow:0 0 0.35px #d8d9da;">192.168.1.1</div><div class="t" style="left:273.20px;top:382.42px;font-size:10px;color:#d8d9da;transform:scaleX(0.9270);transform-origin:0 0;text-shadow:0 0 0.35px #d8d9da;">TCP</div><div class="t" style="left:384.00px;top:382.42px;font-size:10px;color:#d8d9da;transform:scaleX(0.9270);transform-origin:0 0;text-shadow:0 0 0.35px #d8d9da;">SSL</div><div class="t" style="left:523.60px;top:382.42px;font-size:10px;color:#fafafa;transform:scaleX(0.9270);transform-origin:0 0;text-shadow:0 0 0.35px #fafafa;">18.66 s</div><div class="t" style="left:76.00px;top:406.10px;font-size:10px;color:#d8d9da;transform:scaleX(0.9270);transform-origin:0 0;text-shadow:0 0 0.35px #d8d9da;">172.28.190.238</div><div class="t" style="left:273.20px;top:406.10px;font-size:10px;color:#d8d9da;transform:scaleX(0.9270);transform-origin:0 0;text-shadow:0 0 0.35px #d8d9da;">TCP</div><div class="t" style="left:384.00px;top:406.10px;font-size:10px;color:#d8d9da;transform:scaleX(0.9270);transform-origin:0 0;text-shadow:0 0 0.35px #d8d9da;">SSL</div><div class="t" style="left:523.60px;top:406.10px;font-size:10px;color:#fafafa;transform:scaleX(0.9270);transform-origin:0 0;text-shadow:0 0 0.35px #fafafa;">5.58 s</div><div class="t" style="left:76.00px;top:429.77px;font-size:10px;color:#d8d9da;transform:scaleX(0.9270);transform-origin:0 0;text-shadow:0 0 0.35px #d8d9da;">10.0.0.10</div><div class="t" style="left:273.20px;top:429.77px;font-size:10px;color:#d8d9da;transform:scaleX(0.9270);transform-origin:0 0;text-shadow:0 0 0.35px #d8d9da;">TCP</div><div class="t" style="left:384.00px;top:429.77px;font-size:10px;color:#d8d9da;transform:scaleX(0.9270);transform-origin:0 0;text-shadow:0 0 0.35px #d8d9da;">Unknown</div><div class="t" style="left:523.60px;top:429.77px;font-size:10px;color:#fafafa;transform:scaleX(0.9270);transform-origin:0 0;text-shadow:0 0 0.35px #fafafa;">4.02 s</div><div class="t" style="left:76.00px;top:453.46px;font-size:10px;color:#d8d9da;transform:scaleX(0.9270);transform-origin:0 0;text-shadow:0 0 0.35px #d8d9da;">192.168.1.230</div><div class="t" style="left:273.20px;top:453.46px;font-size:10px;color:#d8d9da;transform:scaleX(0.9270);transform-origin:0 0;text-shadow:0 0 0.35px #d8d9da;">TCP</div><div class="t" style="left:384.00px;top:453.46px;font-size:10px;color:#d8d9da;transform:scaleX(0.9270);transform-origin:0 0;text-shadow:0 0 0.35px #d8d9da;">SSL</div><div class="t" style="left:523.60px;top:453.46px;font-size:10px;color:#fafafa;transform:scaleX(0.9270);transform-origin:0 0;text-shadow:0 0 0.35px #fafafa;">3.30 s</div><div class="t" style="left:76.00px;top:477.13px;font-size:10px;color:#d8d9da;transform:scaleX(0.9270);transform-origin:0 0;text-shadow:0 0 0.35px #d8d9da;">10.0.0.10</div><div class="t" style="left:273.20px;top:477.13px;font-size:10px;color:#d8d9da;transform:scaleX(0.9270);transform-origin:0 0;text-shadow:0 0 0.35px #d8d9da;">TCP</div><div class="t" style="left:384.00px;top:477.13px;font-size:10px;color:#d8d9da;transform:scaleX(0.9270);transform-origin:0 0;text-shadow:0 0 0.35px #d8d9da;">BitTorrent</div><div class="t" style="left:523.60px;top:477.13px;font-size:10px;color:#fafafa;transform:scaleX(0.9270);transform-origin:0 0;text-shadow:0 0 0.35px #fafafa;">1.02 s</div><div class="t" style="left:76.00px;top:500.81px;font-size:10px;color:#d8d9da;transform:scaleX(0.9270);transform-origin:0 0;text-shadow:0 0 0.35px #d8d9da;">192.168.1.1</div><div class="t" style="left:273.20px;top:500.81px;font-size:10px;color:#d8d9da;transform:scaleX(0.9270);transform-origin:0 0;text-shadow:0 0 0.35px #d8d9da;">TCP</div><div class="t" style="left:384.00px;top:500.81px;font-size:10px;color:#d8d9da;transform:scaleX(0.9270);transform-origin:0 0;text-shadow:0 0 0.35px #d8d9da;">Skype</div><div class="t" style="left:523.60px;top:500.81px;font-size:10px;color:#fafafa;transform:scaleX(0.9270);transform-origin:0 0;text-shadow:0 0 0.35px #fafafa;">259.32 ms</div><div class="t" style="left:76.00px;top:524.50px;font-size:10px;color:#d8d9da;transform:scaleX(0.9270);transform-origin:0 0;text-shadow:0 0 0.35px #d8d9da;">10.13.41.195</div><div class="t" style="left:273.20px;top:524.50px;font-size:10px;color:#d8d9da;transform:scaleX(0.9270);transform-origin:0 0;text-shadow:0 0 0.35px #d8d9da;">TCP</div><div class="t" style="left:384.00px;top:524.50px;font-size:10px;color:#d8d9da;transform:scaleX(0.9270);transform-origin:0 0;text-shadow:0 0 0.35px #d8d9da;">Unknown</div><div class="t" style="left:523.60px;top:524.50px;font-size:10px;color:#fafafa;transform:scaleX(0.9270);transform-origin:0 0;text-shadow:0 0 0.35px #fafafa;">72.66 ms</div><div class="t" style="left:76.00px;top:548.18px;font-size:10px;color:#d8d9da;transform:scaleX(0.9270);transform-origin:0 0;text-shadow:0 0 0.35px #d8d9da;">192.168.1.1</div><div class="t" style="left:273.20px;top:548.18px;font-size:10px;color:#d8d9da;transform:scaleX(0.9270);transform-origin:0 0;text-shadow:0 0 0.35px #d8d9da;">TCP</div><div class="t" style="left:384.00px;top:548.18px;font-size:10px;color:#d8d9da;transform:scaleX(0.9270);transform-origin:0 0;text-shadow:0 0 0.35px #d8d9da;">Unknown</div><div class="t" style="left:523.60px;top:548.18px;font-size:10px;color:#fafafa;transform:scaleX(0.9270);transform-origin:0 0;text-shadow:0 0 0.35px #fafafa;">3.47 ms</div><div class="t" style="left:76.00px;top:571.86px;font-size:10px;color:#d8d9da;transform:scaleX(0.9270);transform-origin:0 0;text-shadow:0 0 0.35px #d8d9da;">192.168.1.1</div><div class="t" style="left:273.20px;top:571.86px;font-size:10px;color:#d8d9da;transform:scaleX(0.9270);transform-origin:0 0;text-shadow:0 0 0.35px #d8d9da;">TCP</div><div class="t" style="left:384.00px;top:571.86px;font-size:10px;color:#d8d9da;transform:scaleX(0.9270);transform-origin:0 0;text-shadow:0 0 0.35px #d8d9da;">SMB</div><div class="t" style="left:523.60px;top:571.86px;font-size:10px;color:#fafafa;transform:scaleX(0.9270);transform-origin:0 0;text-shadow:0 0 0.35px #fafafa;">0.54 ms</div><div class="t" style="left:742.60px;top:358.74px;font-size:10px;color:#d8d9da;transform:scaleX(0.9270);transform-origin:0 0;text-shadow:0 0 0.35px #d8d9da;">70157207060855</div><div class="t" style="left:947.60px;top:358.74px;font-size:10px;color:#d8d9da;transform:scaleX(0.9270);transform-origin:0 0;text-shadow:0 0 0.35px #d8d9da;">10.0.0.10</div><div class="t" style="left:1103.50px;top:358.74px;font-size:10px;color:#fafafa;transform:scaleX(0.9270);transform-origin:0 0;text-shadow:0 0 0.35px #fafafa;">6.00 s</div><div class="t" style="left:742.60px;top:382.42px;font-size:10px;color:#d8d9da;transform:scaleX(0.9270);transform-origin:0 0;text-shadow:0 0 0.35px #d8d9da;">26280634822855</div><div class="t" style="left:947.60px;top:382.42px;font-size:10px;color:#d8d9da;transform:scaleX(0.9270);transform-origin:0 0;text-shadow:0 0 0.35px #d8d9da;">10.0.0.10</div><div class="t" style="left:1103.50px;top:382.42px;font-size:10px;color:#fafafa;transform:scaleX(0.9270);transform-origin:0 0;text-shadow:0 0 0.35px #fafafa;">6.00 s</div><div class="t" style="left:742.60px;top:406.10px;font-size:10px;color:#d8d9da;transform:scaleX(0.9270);transform-origin:0 0;text-shadow:0 0 0.35px #d8d9da;">70196943861177</div><div class="t" style="left:947.60px;top:406.10px;font-size:10px;color:#d8d9da;transform:scaleX(0.9270);transform-origin:0 0;text-shadow:0 0 0.35px #d8d9da;">10.0.0.10</div><div class="t" style="left:1103.50px;top:406.10px;font-size:10px;color:#fafafa;transform:scaleX(0.9270);transform-origin:0 0;text-shadow:0 0 0.35px #fafafa;">5.99 s</div><div class="t" style="left:742.60px;top:429.77px;font-size:10px;color:#d8d9da;transform:scaleX(0.9270);transform-origin:0 0;text-shadow:0 0 0.35px #d8d9da;">61087041401873</div><div class="t" style="left:947.60px;top:429.77px;font-size:10px;color:#d8d9da;transform:scaleX(0.9270);transform-origin:0 0;text-shadow:0 0 0.35px #d8d9da;">10.0.0.10</div><div class="t" style="left:1103.50px;top:429.77px;font-size:10px;color:#fafafa;transform:scaleX(0.9270);transform-origin:0 0;text-shadow:0 0 0.35px #fafafa;">5.99 s</div><div class="t" style="left:742.60px;top:453.46px;font-size:10px;color:#d8d9da;transform:scaleX(0.9270);transform-origin:0 0;text-shadow:0 0 0.35px #d8d9da;">61399777097354</div><div class="t" style="left:947.60px;top:453.46px;font-size:10px;color:#d8d9da;transform:scaleX(0.9270);transform-origin:0 0;text-shadow:0 0 0.35px #d8d9da;">10.0.0.10</div><div class="t" style="left:1103.50px;top:453.46px;font-size:10px;color:#fafafa;transform:scaleX(0.9270);transform-origin:0 0;text-shadow:0 0 0.35px #fafafa;">5.99 s</div><div class="t" style="left:742.60px;top:477.13px;font-size:10px;color:#d8d9da;transform:scaleX(0.9270);transform-origin:0 0;text-shadow:0 0 0.35px #d8d9da;">25868578013144</div><div class="t" style="left:947.60px;top:477.13px;font-size:10px;color:#d8d9da;transform:scaleX(0.9270);transform-origin:0 0;text-shadow:0 0 0.35px #d8d9da;">10.0.0.10</div><div class="t" style="left:1103.50px;top:477.13px;font-size:10px;color:#fafafa;transform:scaleX(0.9270);transform-origin:0 0;text-shadow:0 0 0.35px #fafafa;">3.09 s</div><div class="t" style="left:742.60px;top:500.81px;font-size:10px;color:#d8d9da;transform:scaleX(0.9270);transform-origin:0 0;text-shadow:0 0 0.35px #d8d9da;">61464201642041</div><div class="t" style="left:947.60px;top:500.81px;font-size:10px;color:#d8d9da;transform:scaleX(0.9270);transform-origin:0 0;text-shadow:0 0 0.35px #d8d9da;">10.0.0.10</div><div class="t" style="left:1103.50px;top:500.81px;font-size:10px;color:#fafafa;transform:scaleX(0.9270);transform-origin:0 0;text-shadow:0 0 0.35px #fafafa;">3.08 s</div><div class="t" style="left:742.60px;top:524.50px;font-size:10px;color:#d8d9da;transform:scaleX(0.9270);transform-origin:0 0;text-shadow:0 0 0.35px #d8d9da;">34908142028480</div><div class="t" style="left:947.60px;top:524.50px;font-size:10px;color:#d8d9da;transform:scaleX(0.9270);transform-origin:0 0;text-shadow:0 0 0.35px #d8d9da;">10.0.0.10</div><div class="t" style="left:1103.50px;top:524.50px;font-size:10px;color:#fafafa;transform:scaleX(0.9270);transform-origin:0 0;text-shadow:0 0 0.35px #fafafa;">3.07 s</div><div class="t" style="left:742.60px;top:548.18px;font-size:10px;color:#d8d9da;transform:scaleX(0.9270);transform-origin:0 0;text-shadow:0 0 0.35px #d8d9da;">70195861767429</div><div class="t" style="left:947.60px;top:548.18px;font-size:10px;color:#d8d9da;transform:scaleX(0.9270);transform-origin:0 0;text-shadow:0 0 0.35px #d8d9da;">10.0.0.10</div><div class="t" style="left:1103.50px;top:548.18px;font-size:10px;color:#fafafa;transform:scaleX(0.9270);transform-origin:0 0;text-shadow:0 0 0.35px #fafafa;">3.05 s</div><div class="t" style="left:742.60px;top:571.86px;font-size:10px;color:#d8d9da;transform:scaleX(0.9270);transform-origin:0 0;text-shadow:0 0 0.35px #d8d9da;">61189323698310</div><div class="t" style="left:947.60px;top:571.86px;font-size:10px;color:#d8d9da;transform:scaleX(0.9270);transform-origin:0 0;text-shadow:0 0 0.35px #d8d9da;">10.0.0.10</div><div class="t" style="left:1103.50px;top:571.86px;font-size:10px;color:#fafafa;transform:scaleX(0.9270);transform-origin:0 0;text-shadow:0 0 0.35px #fafafa;">3.03 s</div><div class="t" style="left:370.20px;top:593.17px;font-size:9.6px;color:#33b5e5;transform:scaleX(0.9357);transform-origin:0 0;text-shadow:0 0 0.35px #33b5e5;">1</div><div class="t" style="left:392.00px;top:593.17px;font-size:9.6px;color:#d8d9da;transform:scaleX(0.9731);transform-origin:0 0;text-shadow:0 0 0.35px #d8d9da;">2</div></div>
</body></html>
